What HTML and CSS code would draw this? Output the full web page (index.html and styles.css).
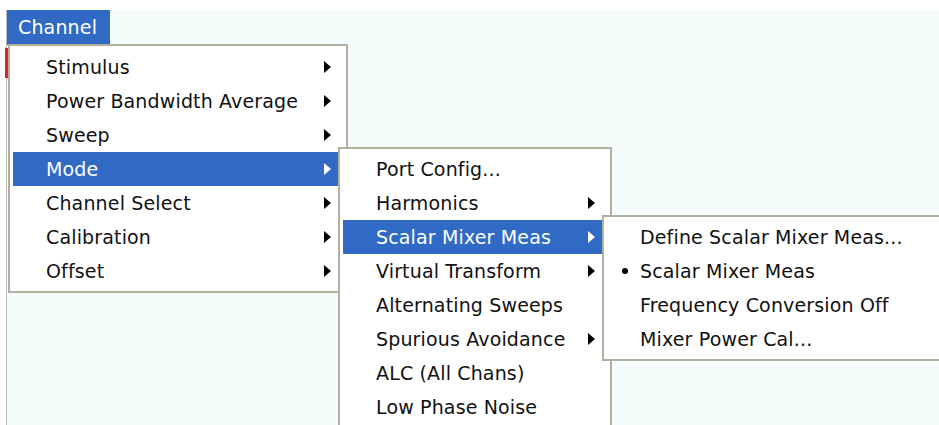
FILE: index.html
```html
<!DOCTYPE html>
<html lang="en">
<head>
<meta charset="UTF-8" />
<meta name="viewport" content="width=device-width, initial-scale=1" />
<title>Channel Menu</title>
<link rel="stylesheet" href="styles.css">
</head>
<body>

<div class="screen">
  <span class="trace-mark"></span>
  <div class="menubar">
    <div class="menubar-item">Channel
      <ul class="menu menu-main">
        <li class="item has-sub">Stimulus</li>
        <li class="item has-sub">Power Bandwidth Average</li>
        <li class="item has-sub">Sweep</li>
        <li class="item has-sub active">Mode
          <ul class="menu menu-mode">
            <li class="item">Port Config...</li>
            <li class="item has-sub">Harmonics</li>
            <li class="item has-sub active">Scalar Mixer Meas
              <ul class="menu menu-mixer">
                <li class="item">Define Scalar Mixer Meas...</li>
                <li class="item checked">Scalar Mixer Meas</li>
                <li class="item">Frequency Conversion Off</li>
                <li class="item">Mixer Power Cal...</li>
              </ul>
            </li>
            <li class="item has-sub">Virtual Transform</li>
            <li class="item">Alternating Sweeps</li>
            <li class="item has-sub">Spurious Avoidance</li>
            <li class="item">ALC (All Chans)</li>
            <li class="item">Low Phase Noise</li>
          </ul>
        </li>
        <li class="item has-sub">Channel Select</li>
        <li class="item has-sub">Calibration</li>
        <li class="item has-sub">Offset</li>
      </ul>
    </div>
  </div>
</div>

</body>
</html>
```

FILE: styles.css
```css
html, body {
  margin: 0;
  height: 100%;
}
body {
  background: #fff;
  overflow: hidden;
  font-family: "DejaVu Sans", Verdana, sans-serif;
  font-size: 19px;
  letter-spacing: 0.15px;
  color: #111;
}
.screen {
  position: relative;
  margin: 10px 0 0 6px;
  height: 415px;
  background: #f4fcfc;
  border-left: 1px solid #bdbdbd;
}
.trace-mark {
  position: absolute;
  left: -2px;
  top: 38px;
  width: 3px;
  height: 30px;
  background: #e02424;
}
.menubar {
  display: flex;
}
.menubar-item {
  position: relative;
  height: 35px;
  line-height: 35px;
  padding: 0 13px 0 11px;
  background: #316ac5;
  color: #fff;
}
.menu {
  position: absolute;
  z-index: 1;
  list-style: none;
  margin: 0;
  padding: 3px;
  box-sizing: border-box;
  background: #fff;
  border: 2px solid #b3b0a2;
  color: #111;
}
.menu-main {
  top: calc(100% - 1px);
  left: 1px;
  width: 340px;
  padding-top: 4px;
}
.menu-mode {
  top: -5px;
  left: calc(100% - 5px);
  width: 274px;
}
.menu-mixer {
  top: -5px;
  left: calc(100% - 5px);
  width: 339px;
  border-right: 0;
}
.item {
  position: relative;
  height: 34px;
  line-height: 34px;
  padding-left: 33px;
  white-space: nowrap;
}
.has-sub::after {
  content: "";
  position: absolute;
  right: 12px;
  top: 11px;
  border-left: 7px solid #000;
  border-top: 6px solid transparent;
  border-bottom: 6px solid transparent;
}
.active {
  background: #316ac5;
  color: #fff;
}
.active::after {
  border-left-color: #fff;
}
.checked::before {
  content: "";
  position: absolute;
  left: 15px;
  top: 14px;
  width: 6px;
  height: 6px;
  border-radius: 50%;
  background: #000;
}
```
